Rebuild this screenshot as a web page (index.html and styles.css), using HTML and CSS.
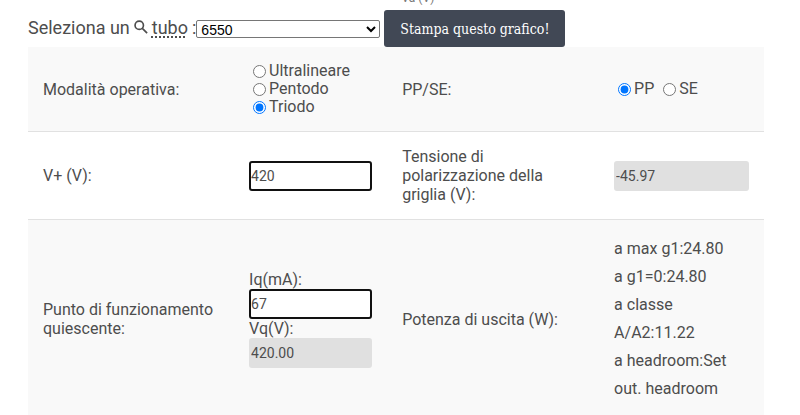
FILE: index.html
```
<!DOCTYPE html>
<html lang="it">
<head>
    <meta charset="UTF-8">
    <meta name="viewport" content="width=device-width, initial-scale=1.0">
    <title>Calcolatore retta di carico</title>
    <link rel="stylesheet" href="styles.css">
</head>
<body>
    <div class="container">
        <!-- Bottom edge of the chart -->
        <div class="chart-axis"><span>Va (V)</span></div>

        <div class="toolbar">
            <label class="tube-label" for="tube">
                <span>Seleziona un</span>
                <svg class="search-icon" viewBox="0 0 16 16" aria-hidden="true">
                    <circle cx="6" cy="6" r="4.8"/>
                    <path d="M9.5 9.5L15 15"/>
                </svg>
                <span class="term">tubo</span>
                <span>:</span>
            </label>
            <select id="tube" class="tube-select">
                <option selected>6550</option>
            </select>
            <button type="button" class="print-button">Stampa questo grafico!</button>
        </div>

        <table class="params">
            <colgroup>
                <col class="col-name">
                <col class="col-input">
                <col class="col-name2">
                <col class="col-output">
            </colgroup>
            <tbody>
                <tr>
                    <td>Modalità operativa:</td>
                    <td>
                        <div class="option"><input type="radio" name="mode" id="ul"><label for="ul">Ultralineare</label></div>
                        <div class="option"><input type="radio" name="mode" id="pentode"><label for="pentode">Pentodo</label></div>
                        <div class="option"><input type="radio" name="mode" id="triode" checked><label for="triode">Triodo</label></div>
                    </td>
                    <td>PP/SE:</td>
                    <td>
                        <div class="option">
                            <input type="radio" name="output" id="pp" checked><label for="pp">PP</label>
                            <input type="radio" name="output" id="se" class="second"><label for="se">SE</label>
                        </div>
                    </td>
                </tr>
                <tr>
                    <td><label for="vplus">V+ (V):</label></td>
                    <td><input type="text" class="field" id="vplus" value="420"></td>
                    <td><label for="bias">Tensione di polarizzazione della griglia (V):</label></td>
                    <td><input type="text" class="field readonly" id="bias" value="-45.97" readonly></td>
                </tr>
                <tr>
                    <td>Punto di funzionamento quiescente:</td>
                    <td>
                        <label for="iq">Iq(mA):</label>
                        <input type="text" class="field" id="iq" value="67">
                        <label for="vq">Vq(V):</label>
                        <input type="text" class="field readonly" id="vq" value="420.00" readonly>
                    </td>
                    <td>Potenza di uscita (W):</td>
                    <td class="power">
                        a max g1:24.80<br>
                        a g1=0:24.80<br>
                        a classe<br>
                        A/A2:11.22<br>
                        a headroom:Set<br>
                        out. headroom
                    </td>
                </tr>
            </tbody>
        </table>
    </div>
</body>
</html>
```

FILE: styles.css
```
* {
    box-sizing: border-box;
}

body {
    margin: 0;
    background: #fff;
    color: #4d4d4d;
    font-family: Roboto, "Liberation Sans", sans-serif;
    font-size: 16px;
    line-height: 19px;
}

.container {
    padding: 0 36px 0 28px;
    overflow: hidden;
}

.chart-axis {
    display: flex;
    align-items: flex-end;
    justify-content: center;
    height: 5px;
    margin-bottom: 5px;
    padding-left: 44px;
    overflow: hidden;
    font-size: 12px;
    line-height: 14px;
    color: #777;
}

.toolbar {
    display: flex;
    align-items: center;
}

.tube-label {
    display: flex;
    align-items: center;
    gap: 4px;
    font-size: 18px;
    line-height: 20px;
    padding-bottom: 2px;
    white-space: nowrap;
}

.search-icon {
    width: 14px;
    height: 14px;
    margin-bottom: 2px;
    fill: none;
    stroke: #4d4d4d;
    stroke-width: 1.9;
}

.term {
    text-decoration: underline dotted 2px;
    text-underline-offset: 3px;
}

.tube-select {
    width: 184px;
    height: 18px;
    padding: 0;
    border: 1px solid #767676;
    border-radius: 2px;
    background: #fff;
    color: #000;
    font-family: "Liberation Sans", Arial, sans-serif;
    font-size: 14px;
}

.print-button {
    height: 37px;
    margin-left: 4px;
    padding: 0 16px;
    border: 0;
    border-radius: 3px;
    background: #414855;
    color: #fff;
    font-family: "Roboto Slab", "DejaVu Serif Condensed", "DejaVu Serif", serif;
    font-size: 14px;
    white-space: nowrap;
}

.params {
    width: 100%;
    border-collapse: collapse;
    table-layout: fixed;
}

.col-name {
    width: 28%;
}

.col-input {
    width: 20.8%;
}

.col-name2 {
    width: 28.8%;
}

.params td {
    padding: 15px;
    vertical-align: middle;
}

.params tr {
    border-bottom: 1px solid #e1e1e1;
}

.params tr:nth-child(odd) {
    background: #f9f9f9;
}

.option {
    display: flex;
    align-items: center;
    line-height: 18px;
}

.option input {
    width: 13px;
    height: 13px;
    margin: 0 3px 0 4px;
}

.option .second {
    margin-left: 9px;
}

.field {
    display: block;
    width: 100%;
    height: 30px;
    padding: 0;
    border: 2px solid #111;
    border-radius: 3px;
    background: #fff;
    color: #4d4d4d;
    font-family: Roboto, "Liberation Sans", sans-serif;
    font-size: 14px;
}

.field.readonly {
    border-color: #e0e0e0;
    background: #e0e0e0;
}

.params .power {
    line-height: 28px;
}
```
